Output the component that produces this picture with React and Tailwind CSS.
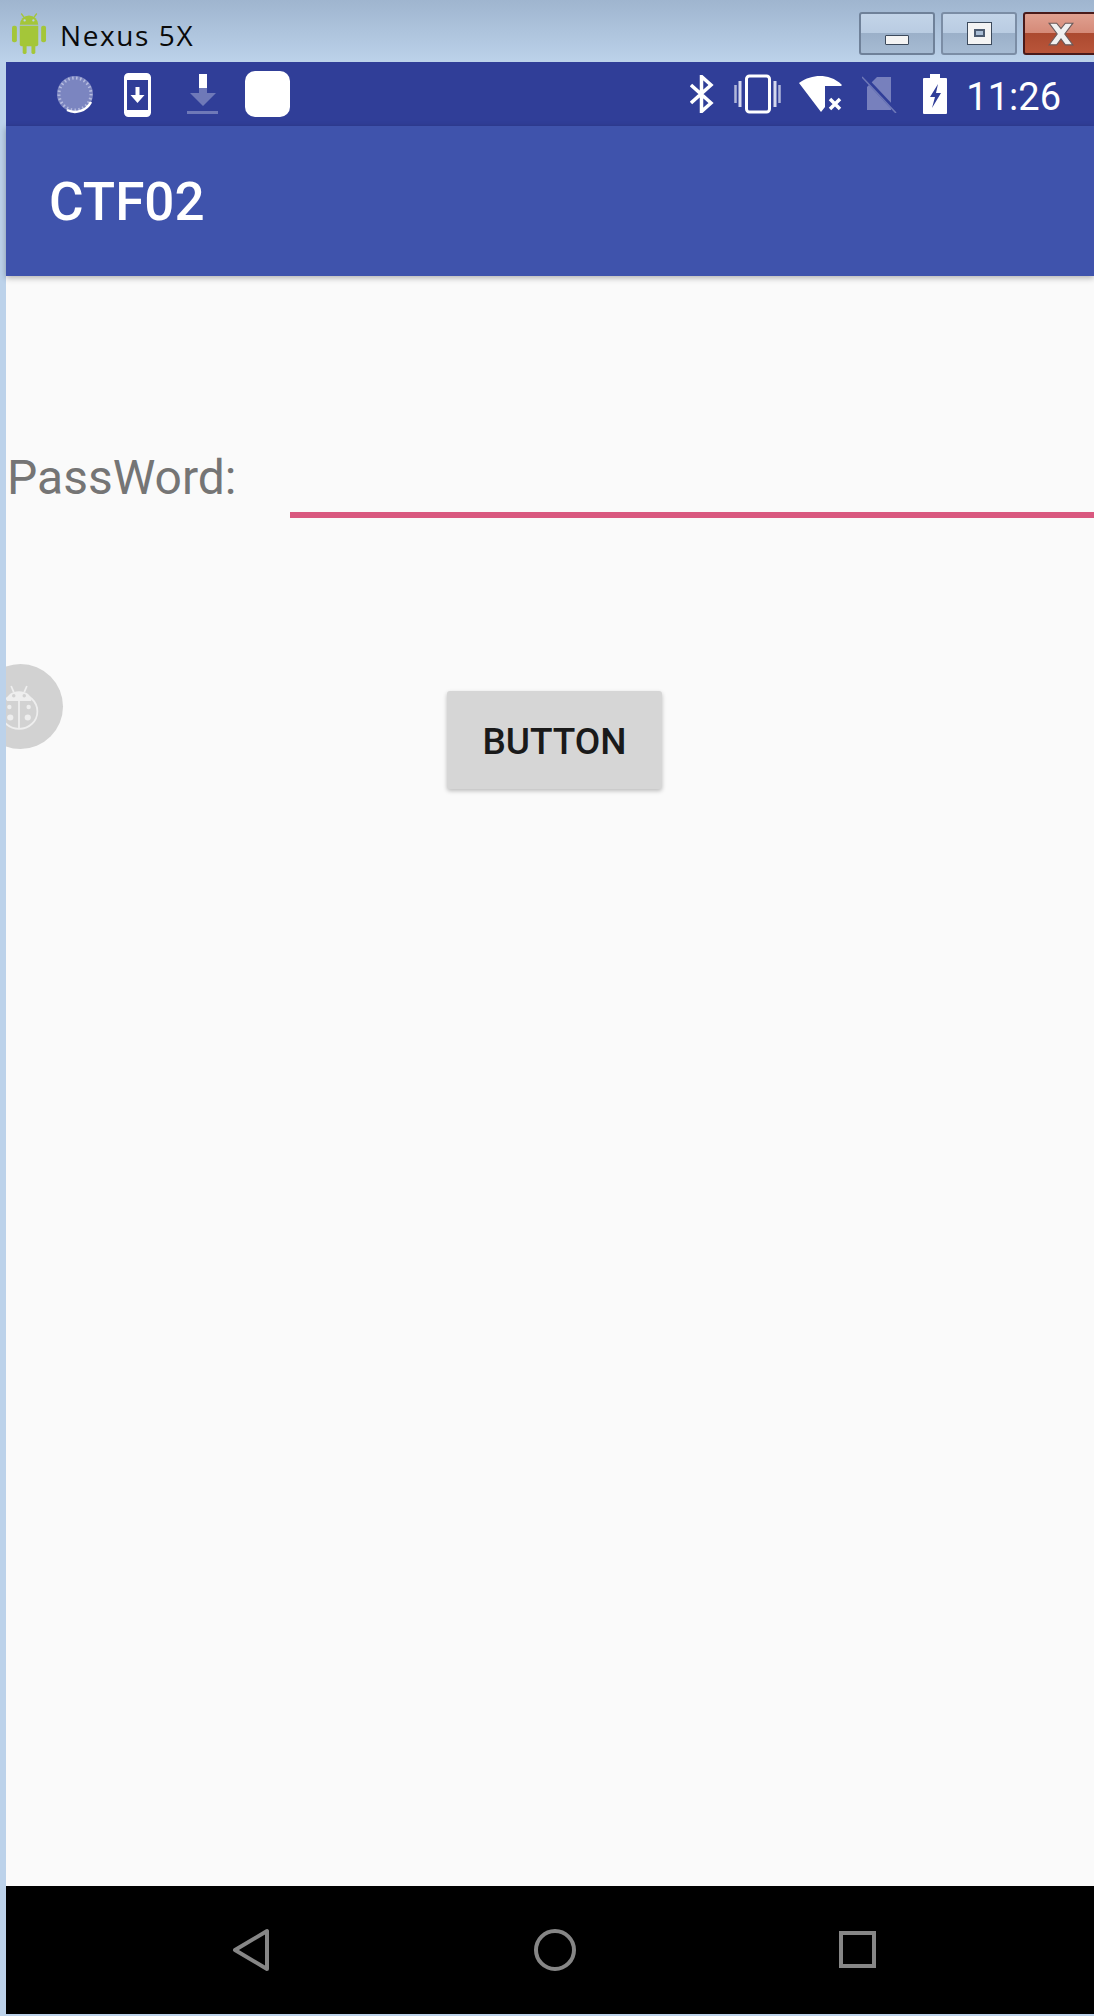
const ROBOTO = "font-['Roboto',sans-serif]"

function AndroidLogo() {
  return (
    <svg width="35" height="41" viewBox="0 0 36 42" className="ml-3 mt-[13px] shrink-0">
      <g fill="#a4c639">
        <rect x="0" y="13" width="5" height="17" rx="2" />
        <rect x="30" y="13" width="5" height="17" rx="2" />
        <path d="M8 12a9.5 9.5 0 0 1 19 0z" />
        <path d="M8 13h19v19a2 2 0 0 1-2 2H10a2 2 0 0 1-2-2z" />
        <rect x="11" y="32" width="4" height="10" rx="1.5" />
        <rect x="20" y="32" width="4" height="10" rx="1.5" />
        <path d="M10 0l3 4-1 1-3-4zM25 0l-3 4 1 1 3-4z" />
      </g>
      <circle cx="13" cy="7.5" r="1.2" fill="#bcd0e4" />
      <circle cx="22" cy="7.5" r="1.2" fill="#bcd0e4" />
    </svg>
  )
}

function WindowButton({ children, className }) {
  return (
    <div className={`relative flex h-[43px] shrink-0 items-center justify-center rounded-[3px] border-2 ${className}`}>
      {children}
    </div>
  )
}

function TitleBar() {
  return (
    <div className="flex h-[62px] shrink-0 bg-gradient-to-b from-[#9fb5cf] to-[#bcd2ea]">
      <AndroidLogo />
      <div className="ml-[13px] mt-[16px] font-['Open_Sans',sans-serif] text-[28px] leading-[38px] tracking-[1.6px] text-[#0a0a0a]">Nexus 5X</div>
      <div className="ml-auto mt-3 flex w-[235px] gap-[6px] overflow-hidden">
        <WindowButton className="w-[76px] border-[#6f8199] bg-[linear-gradient(#c3d4e8_0%,#b9cce2_48%,#9bb0c9_50%,#a6bbd3_100%)]">
          <div className="mt-[12px] h-[10px] w-[24px] rounded-[1px] border border-[#3c4a5c] bg-[#f4f4f4]" />
        </WindowButton>
        <WindowButton className="w-[76px] border-[#7b8da5] bg-[linear-gradient(#c3d4e8_0%,#b9cce2_48%,#9bb0c9_50%,#a6bbd3_100%)]">
          <div className="mb-[1px] flex h-[23px] w-[25px] items-center justify-center border border-[#3c4a5c] bg-[#f4f4f4]">
            <div className="h-[8px] w-[11px] border-2 border-[#4b5a70] bg-[#a9bdd5]" />
          </div>
        </WindowButton>
        <WindowButton className="w-[76px] border-[#4a1a1a] bg-[linear-gradient(#e0a090_0%,#d58a78_48%,#ac4a30_50%,#b9553a_100%)]">
          <svg width="32" height="26" viewBox="0 0 28 24" className="shrink-0">
            <path d="M3 2h7l4 5 4-5h7l-7.500 10L25 22h-7l-4-5.500L10 22H3l7.500-10z" fill="#f0f0f0" stroke="#6a5a5a" strokeWidth="1" />
          </svg>
        </WindowButton>
      </div>
    </div>
  )
}

function StatusBar() {
  return (
    <div className="flex h-[64px] shrink-0 items-center bg-[#303e98] pl-[50px] text-white">
      <svg width="40" height="40" viewBox="0 0 40 40" className="mt-[2px] shrink-0">
        <circle cx="19" cy="19" r="18" fill="#7b85c0" />
        <circle cx="19" cy="19" r="16" fill="none" stroke="#b6bcdf" strokeWidth="3" strokeDasharray="1.500 2.500" />
        <path d="M35 27a18 18 0 0 1-24 8" fill="none" stroke="#fff" strokeWidth="2.500" />
      </svg>
      <svg width="28" height="44" viewBox="0 0 28 44" className="ml-[28px] mt-[2px] shrink-0">
        <rect x="1.500" y="1.500" width="24" height="41" rx="3" fill="none" stroke="#fff" strokeWidth="3" />
        <rect x="2" y="2" width="23" height="5" fill="#fff" />
        <rect x="2" y="37" width="23" height="5" fill="#fff" />
        <path d="M11.500 14h4v8h5l-7 8-7-8h5z" fill="#fff" />
      </svg>
      <svg width="32" height="42" viewBox="0 0 32 42" className="ml-[35px] mt-[2px] shrink-0">
        <rect x="12" y="0" width="8" height="14" fill="#fff" />
        <path d="M12 14h8v5h9L16 32 3 19h9z" fill="#6f79b8" />
        <rect x="0" y="37" width="31" height="3" fill="#6f79b8" />
      </svg>
      <div className="ml-[26px] h-[46px] w-[45px] shrink-0 rounded-[10px] bg-white" />
      <div className="ml-auto flex items-center pr-[33px]">
        <svg width="24" height="38" viewBox="0 0 24 38" className="shrink-0">
          <path d="M1 10l20 18-9.500 8.500V1.500L21 10 1 28" fill="none" stroke="#fff" strokeWidth="3.500" />
        </svg>
        <svg width="47" height="40" viewBox="0 0 47 40" className="ml-[20px] shrink-0">
          <rect x="12.500" y="2" width="23" height="36" rx="3" fill="none" stroke="#fff" strokeWidth="3" />
          <path d="M6 7v26M41 7v26" stroke="#d5d8ee" strokeWidth="3" />
          <path d="M1.500 11v18M45.500 11v18" stroke="#b0b6da" strokeWidth="2.500" />
        </svg>
        <svg width="46" height="38" viewBox="0 0 46 38" className="ml-[17px] shrink-0">
          <path d="M1 8C8 3 15 1 22 1s15 2 22 9l-1 1H27v21l-4 5z" fill="#fff" />
          <path d="M32 24l10 10M42 24L32 34" stroke="#fff" strokeWidth="3.500" />
        </svg>
        <svg width="36" height="38" viewBox="0 0 36 38" className="ml-[18px] shrink-0">
          <path d="M15 2h14v33H5V12z" fill="#7780bd" />
          <path d="M1 1l34 36" stroke="#303e98" strokeWidth="4" />
          <path d="M0 2l34 36" stroke="#6f79b8" strokeWidth="1.500" />
        </svg>
        <svg width="24" height="40" viewBox="0 0 24 40" className="ml-[25px] shrink-0">
          <path d="M7 0h10v4h6a1 1 0 0 1 1 1v34a1 1 0 0 1-1 1H1a1 1 0 0 1-1-1V5a1 1 0 0 1 1-1h6z" fill="#fff" />
          <path d="M15 10l-8 13h5l-3 11 9-15h-5z" fill="#303e98" />
        </svg>
        <div className={`ml-[19px] mt-[6px] ${ROBOTO} text-[38px] leading-none`}>11:26</div>
      </div>
    </div>
  )
}

function BugButton() {
  return (
    <div className="absolute left-[-28px] top-[388px] flex h-[85px] w-[85px] items-center justify-center rounded-full bg-[#d2d2d2]">
      <svg width="42" height="48" viewBox="0 0 48 52" className="mr-[3px]">
        <g fill="none" stroke="#eeeeee" strokeWidth="2">
          <ellipse cx="24" cy="31" rx="21" ry="20" />
          <path d="M24 14v37M15 2l3 7M33 2l-3 7" />
        </g>
        <path d="M10 19c0-7 6-11 14-11s14 4 14 11z" fill="#eeeeee" />
        <circle cx="18" cy="13" r="2" fill="#d2d2d2" />
        <circle cx="30" cy="13" r="2" fill="#d2d2d2" />
        <g fill="#eeeeee">
          <circle cx="13" cy="26" r="2.500" />
          <circle cx="35" cy="26" r="2.500" />
          <circle cx="14" cy="38" r="3.500" />
          <circle cx="34" cy="38" r="3.500" />
        </g>
      </svg>
    </div>
  )
}

function NavBar() {
  return (
    <div className="flex h-[128px] shrink-0 items-center bg-black">
      <svg width="40" height="44" viewBox="0 0 40 44" className="ml-[226px] shrink-0">
        <path d="M35 3v38L3 22z" fill="none" stroke="#868686" strokeWidth="4" strokeLinejoin="round" />
      </svg>
      <svg width="44" height="44" viewBox="0 0 44 44" className="ml-[261px] shrink-0">
        <circle cx="22" cy="22" r="19" fill="none" stroke="#868686" strokeWidth="4" />
      </svg>
      <svg width="38" height="38" viewBox="0 0 38 38" className="ml-[262px] shrink-0">
        <rect x="2" y="2" width="33" height="33" fill="none" stroke="#868686" strokeWidth="4" />
      </svg>
    </div>
  )
}

export default function App() {
  return (
    <div className="flex h-[2016px] w-[1094px] flex-col overflow-hidden bg-[#bcd2ea]">
      <TitleBar />
      <div className="ml-[6px] flex h-[1952px] flex-col">
        <StatusBar />
        <div className="z-10 flex h-[150px] shrink-0 items-center bg-[#3f53ac] pl-[43px] pt-[2px] shadow-[0_2px_6px_rgba(0,0,0,0.3)]">
          <div className={`${ROBOTO} text-[53px] font-medium leading-none text-white`}>CTF02</div>
        </div>
        <div className="relative flex-1 overflow-hidden bg-[#fafafa]">
          <BugButton />
          <div className="mt-[174px] flex h-[68px] items-start">
            <div className={`ml-[1px] ${ROBOTO} text-[48px] leading-[56px] text-[#757575]`}>PassWord:</div>
            <div className="ml-auto mt-[62px] h-[6px] w-[804px] bg-[#d9587f]" />
          </div>
          <div className="ml-[441px] mt-[173px] flex h-[98px] w-[215px] items-center justify-center rounded-[3px] bg-[#d6d6d6] pt-[2px] shadow-[0_2px_4px_rgba(0,0,0,0.25)]">
            <div className={`${ROBOTO} text-[37px] font-medium leading-none text-[#1a1a1a]`}>BUTTON</div>
          </div>
        </div>
        <NavBar />
      </div>
    </div>
  )
}
